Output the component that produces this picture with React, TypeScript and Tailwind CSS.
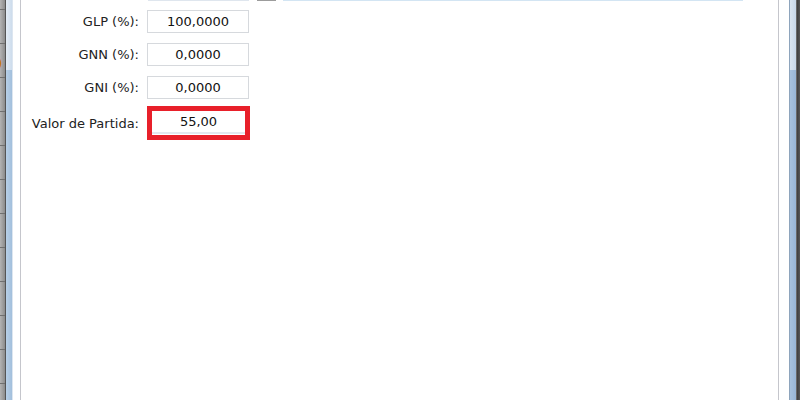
import React from "react";

const font = { fontFamily: '"DejaVu Sans", Verdana, sans-serif' };

function Field({ label, value }: { label: string; value: string }) {
  return (
    <div className="flex items-center h-[23px]">
      <div className="w-[118px] text-right text-[13px] text-[#222] leading-none">{label}</div>
      <div className="ml-[8px] w-[102px] h-[23px] border border-[#d6d9dd] bg-white flex items-center justify-center text-[13px] text-[#111] leading-none">
        {value}
      </div>
    </div>
  );
}

export default function App() {
  return (
    <div className="w-[800px] h-[400px] flex overflow-hidden bg-white" style={font}>
      {/* spreadsheet strip */}
      <div className="relative w-[5px] h-full bg-gradient-to-r from-[#b4b4b4] to-[#8c8c8c] overflow-hidden">
        <div className="absolute inset-0 bg-[repeating-linear-gradient(to_bottom,transparent_0px,transparent_9px,#707070_9px,#707070_10px,transparent_10px,transparent_34px)]" />
        <span className="absolute left-[-4px] top-[56px] text-[14px] font-bold text-[#c07800] leading-none">)</span>
      </div>
      <div className="w-[1px] h-full bg-[#555]" />
      <div className="w-[6px] h-full flex flex-col">
        <div className="h-[70px] bg-gradient-to-r from-[#e4edf6] to-[#cddcec]" />
        <div className="flex-1 bg-gradient-to-r from-[#b8d0e8] to-[#a2bfdc]" />
      </div>
      <div className="w-[1px] h-full bg-[#dde6f0]" />
      <div className="w-[7px] h-full bg-white" />
      <div className="w-[1px] h-full bg-[#c5c6cc]" />

      {/* content */}
      <div className="flex-1 h-full flex flex-col">
        <div className="h-[1px] flex">
          <div className="w-[127px]" />
          <div className="w-[101px] bg-[#dfe6ee]" />
          <div className="w-[8px]" />
          <div className="w-[19px] bg-[#9c9c9c]" />
          <div className="w-[7px]" />
          <div className="w-[460px] bg-[#d3e5f3]" />
        </div>
        <div className="flex flex-col gap-[10px] mt-[9px]">
          <Field label="GLP (%):" value="100,0000" />
          <Field label="GNN (%):" value="0,0000" />
          <Field label="GNI (%):" value="0,0000" />
        </div>
        <div className="flex items-center mt-[7px] h-[34px]">
          <div className="w-[118px] text-right text-[13px] text-[#222] leading-none">Valor de Partida:</div>
          <div className="ml-[8px] w-[103px] h-[34px] border-[5px] border-[#e8202a] bg-white flex flex-col">
            <div className="flex-1 flex items-center justify-center text-[13px] text-[#111] leading-none">55,00</div>
            <div className="h-[2px] bg-[#e3e8ef]" />
            <div className="h-[1px]" />
          </div>
        </div>
      </div>

      <div className="w-[1px] h-full bg-[#c5c6cc]" />
      <div className="w-[10px] h-full bg-white" />
      <div className="w-[1px] h-full bg-[#8ea4bc]" />
      <div className="w-[6px] h-full flex flex-col">
        <div className="h-[70px] bg-gradient-to-r from-[#dbe6f1] to-[#c8d8ea]" />
        <div className="flex-1 bg-gradient-to-r from-[#a8c2de] to-[#98b6d6]" />
      </div>
      <div className="w-[1px] h-full bg-[#6a6a6a]" />
      <div className="w-[3px] h-full bg-gradient-to-r from-[#3e3e3e] to-[#585858]" />
    </div>
  );
}
